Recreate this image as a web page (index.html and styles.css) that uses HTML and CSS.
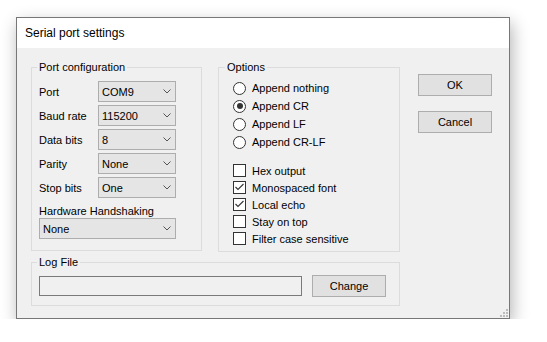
FILE: index.html
```html
<!doctype html>
<html lang="en">
<head>
  <meta charset="UTF-8" />
  <title>Serial port settings</title>
  <link rel="stylesheet" href="styles.css">
</head>
<body>
  <div class="window">
    <div class="titlebar">Serial port settings</div>

    <div class="content">
      <div class="top-row">
        <fieldset class="group port-group">
          <legend>Port configuration</legend>

          <div class="field-row">
            <label>Port</label>
            <div class="combo"><span>COM9</span><svg class="chevron" width="8" height="5" viewBox="0 0 8 5"><path d="M0.5 0.5 L4 4 L7.5 0.5" /></svg></div>
          </div>
          <div class="field-row">
            <label>Baud rate</label>
            <div class="combo"><span>115200</span><svg class="chevron" width="8" height="5" viewBox="0 0 8 5"><path d="M0.5 0.5 L4 4 L7.5 0.5" /></svg></div>
          </div>
          <div class="field-row">
            <label>Data bits</label>
            <div class="combo"><span>8</span><svg class="chevron" width="8" height="5" viewBox="0 0 8 5"><path d="M0.5 0.5 L4 4 L7.5 0.5" /></svg></div>
          </div>
          <div class="field-row">
            <label>Parity</label>
            <div class="combo"><span>None</span><svg class="chevron" width="8" height="5" viewBox="0 0 8 5"><path d="M0.5 0.5 L4 4 L7.5 0.5" /></svg></div>
          </div>
          <div class="field-row">
            <label>Stop bits</label>
            <div class="combo"><span>One</span><svg class="chevron" width="8" height="5" viewBox="0 0 8 5"><path d="M0.5 0.5 L4 4 L7.5 0.5" /></svg></div>
          </div>

          <div class="hw-label">Hardware Handshaking</div>
          <div class="combo"><span>None</span><svg class="chevron" width="8" height="5" viewBox="0 0 8 5"><path d="M0.5 0.5 L4 4 L7.5 0.5" /></svg></div>
        </fieldset>

        <fieldset class="group options-group">
          <legend>Options</legend>

          <div class="radio-list">
            <div class="option"><span class="radio"></span>Append nothing</div>
            <div class="option"><span class="radio checked"></span>Append CR</div>
            <div class="option"><span class="radio"></span>Append LF</div>
            <div class="option"><span class="radio"></span>Append CR-LF</div>
          </div>

          <div class="check-list">
            <div class="option check"><span class="box"></span>Hex output</div>
            <div class="option check"><span class="box"><svg width="11" height="11" viewBox="0 0 11 11"><path d="M1.5 5 L4 7.5 L9.5 2" /></svg></span>Monospaced font</div>
            <div class="option check"><span class="box"><svg width="11" height="11" viewBox="0 0 11 11"><path d="M1.5 5 L4 7.5 L9.5 2" /></svg></span>Local echo</div>
            <div class="option check"><span class="box"></span>Stay on top</div>
            <div class="option check"><span class="box"></span>Filter case sensitive</div>
          </div>
        </fieldset>

        <div class="buttons">
          <button class="btn">OK</button>
          <button class="btn">Cancel</button>
        </div>
      </div>

      <fieldset class="group log-group">
        <legend>Log File</legend>
        <div class="log-row">
          <div class="log-input"></div>
          <button class="btn">Change</button>
        </div>
      </fieldset>
    </div>

    <svg class="grip" width="8" height="8" viewBox="0 0 8 8">
      <rect x="6" y="0" width="2" height="2" />
      <rect x="3" y="3" width="2" height="2" />
      <rect x="6" y="3" width="2" height="2" />
      <rect x="0" y="6" width="2" height="2" />
      <rect x="3" y="6" width="2" height="2" />
      <rect x="6" y="6" width="2" height="2" />
    </svg>
  </div>
</body>
</html>
```

FILE: styles.css
```css
* {
  box-sizing: border-box;
}

body {
  margin: 0;
  background: #fff;
  font-family: "Liberation Sans", Arial, sans-serif;
  font-size: 11px;
  color: #000;
}

.window {
  position: relative;
  margin: 17px 0 0 16px;
  width: 494px;
  height: 302px;
  border: 1px solid #777;
  background: #f0f0f0;
  box-shadow: 2px 6px 16px rgba(0, 0, 0, 0.3);
}

.titlebar {
  height: 30px;
  background: #fff;
  display: flex;
  align-items: center;
  padding-left: 8px;
  font-size: 12px;
}

.content {
  padding: 12px 0 0 14px;
}

.top-row {
  display: flex;
  align-items: flex-start;
}

.group {
  margin: 0;
  min-width: 0;
  border: 1px solid #dcdcdc;
}

.group legend {
  padding: 0 2px;
  margin-left: -2px;
  line-height: 14px;
}

/* ===== Port configuration ===== */
.port-group {
  width: 171px;
  padding: 7px 25px 11px 7px;
}

.field-row {
  display: flex;
  align-items: center;
  height: 21px;
}

.field-row + .field-row {
  margin-top: 3px;
}

.field-row label {
  width: 59px;
  flex: none;
}

.combo {
  flex: 1;
  height: 21px;
  border: 1px solid #adadad;
  background: #e5e5e5;
  display: flex;
  align-items: center;
  justify-content: space-between;
  padding: 0 4px 0 3px;
}

.chevron path {
  fill: none;
  stroke: #555;
  stroke-width: 1;
}

.hw-label {
  margin-top: 6px;
  line-height: 14px;
}

/* ===== Options ===== */
.options-group {
  width: 182px;
  margin-left: 16px;
  padding: 5px 8px 4px 14px;
}

.options-group legend {
  margin-left: -8px;
}

.option {
  display: flex;
  align-items: center;
  gap: 6px;
  height: 18px;
}

.check {
  height: 17px;
}

.check-list {
  margin-top: 11px;
}

.radio {
  width: 13px;
  height: 13px;
  border: 1px solid #333;
  border-radius: 50%;
  background: #fff;
  display: flex;
  align-items: center;
  justify-content: center;
}

.radio.checked::after {
  content: "";
  width: 6px;
  height: 6px;
  border-radius: 50%;
  background: #333;
}

.box {
  width: 13px;
  height: 13px;
  border: 1px solid #333;
  background: #fff;
  display: flex;
  align-items: center;
  justify-content: center;
}

.box path {
  fill: none;
  stroke: #333;
  stroke-width: 1.1;
}

/* ===== Buttons ===== */
.buttons {
  display: flex;
  flex-direction: column;
  gap: 15px;
  margin: 14px 0 0 18px;
}

.btn {
  width: 74px;
  height: 22px;
  padding: 0;
  border: 1px solid #adadad;
  background: #e1e1e1;
  font: inherit;
  color: #000;
}

/* ===== Log file ===== */
.log-group {
  width: 369px;
  margin-top: 3px;
  padding: 6px 13px 8px 7px;
}

.log-row {
  display: flex;
  align-items: center;
  gap: 10px;
}

.log-input {
  width: 263px;
  height: 20px;
  border: 1px solid #7a7a7a;
  background: #f0f0f0;
}

.grip {
  position: absolute;
  right: 1px;
  bottom: 1px;
  fill: #bcbcbc;
}
```
